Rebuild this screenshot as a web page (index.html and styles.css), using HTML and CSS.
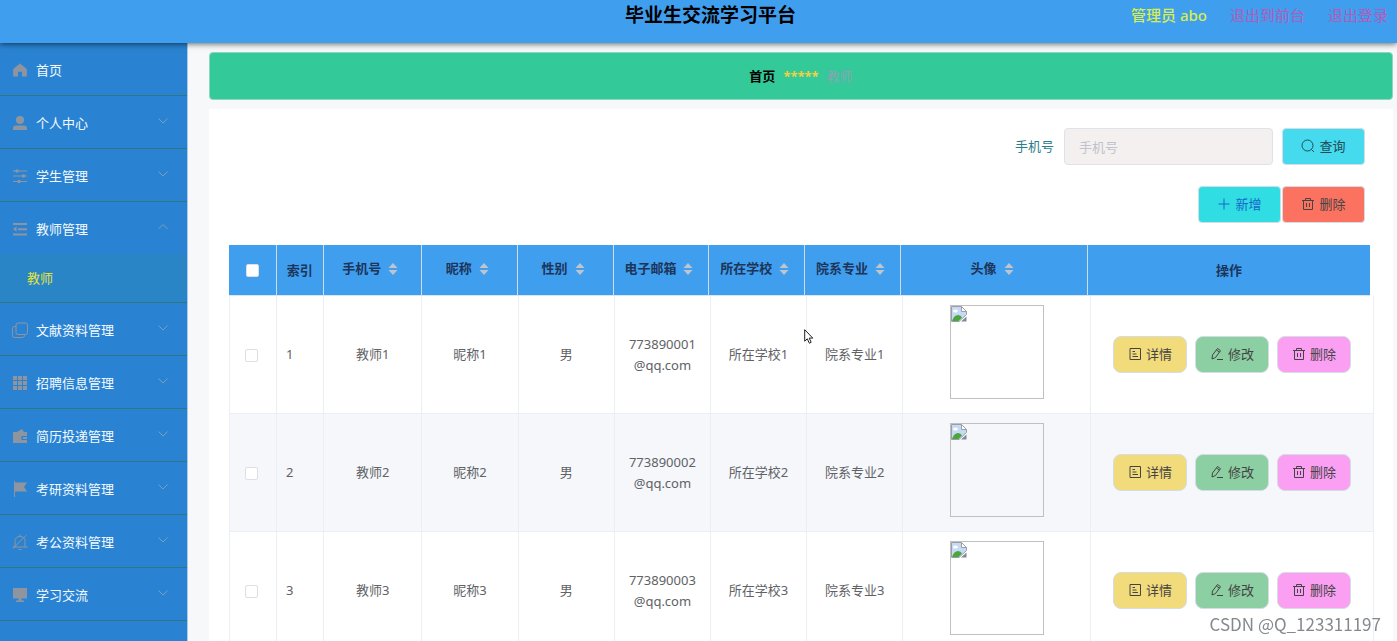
FILE: index.html
```html
<!DOCTYPE html>
<html lang="zh-CN">
<head>
<meta charset="utf-8">
<title>毕业生交流学习平台</title>
<link rel="stylesheet" href="styles.css">
</head>
<body>
<svg class="sprite" aria-hidden="true">
  <symbol id="i-down" viewBox="0 0 14 14"><path d="M2.500 4.500L7 9l4.500-4.500" fill="none" stroke="currentColor"/></symbol>
  <symbol id="i-up" viewBox="0 0 14 14"><path d="M2.500 9L7 4.500 11.500 9" fill="none" stroke="currentColor"/></symbol>
  <symbol id="i-home" viewBox="0 0 16 16"><path d="M8 1.500L1.200 7v7.500H6V9.800h4v4.700h4.800V7z" fill="currentColor"/></symbol>
  <symbol id="i-user" viewBox="0 0 16 16"><circle cx="8" cy="5" r="4" fill="currentColor"/><path d="M1 15v-1.500Q1 10.500 4 10.500h8q3 0 3 3V15z" fill="currentColor"/></symbol>
  <symbol id="i-sliders" viewBox="0 0 16 16"><g fill="none" stroke="currentColor" stroke-width="1.200"><path d="M1 3h14M1 8h14M1 13.500h14"/></g><g fill="currentColor"><circle cx="5" cy="3" r="1.700"/><circle cx="11.500" cy="8" r="1.700"/><circle cx="7" cy="13.500" r="1.700"/></g></symbol>
  <symbol id="i-fold" viewBox="0 0 16 16"><path d="M1 2h14v2H1zM6 7.200h9v2H6zM1 12.400h14v2H1zM4.500 5.500v5.200L1 8.100z" fill="currentColor"/></symbol>
  <symbol id="i-copy" viewBox="0 0 16 16"><g fill="none" stroke="currentColor"><rect x="4" y="1" width="11.500" height="11.500" rx="2"/><path d="M4 4.500H2.500q-2 0-2 2v7q0 2 2 2h8q2 0 2-2v-1"/></g></symbol>
  <symbol id="i-grid" viewBox="0 0 16 16"><path d="M1 1h4v4H1zM6 1h4v4H6zM11 1h4v4h-4zM1 6h4v4H1zM6 6h4v4H6zM11 6h4v4h-4zM1 11h4v4H1zM6 11h4v4H6zM11 11h4v4h-4z" fill="currentColor"/></symbol>
  <symbol id="i-wallet" viewBox="0 0 16 16"><path d="M1 4h4l5-3 2 3h3v4H9.500v4H15v3H1zM11 9h4v2h-4z" fill="currentColor"/></symbol>
  <symbol id="i-flag" viewBox="0 0 16 16"><path d="M2 0h1v1.500h12L12 6l3 4.500H3V16H2z" fill="currentColor"/></symbol>
  <symbol id="i-mute" viewBox="0 0 16 16"><g fill="none" stroke="currentColor"><path d="M3 13V7.500Q3 2.500 8 2.500t5 5V13M.5 13h15M8 .5v2M6.500 15.500h3M.8 14.500L14.500 1"/></g></symbol>
  <symbol id="i-monitor" viewBox="0 0 16 16"><path d="M1 1h14v10.500H1zM6.500 11.500h3v2h2.500V15H4v-1.500h2.500z" fill="currentColor"/></symbol>
  <symbol id="i-search" viewBox="0 0 14 14"><g fill="none" stroke="currentColor"><circle cx="6.500" cy="6.500" r="5.500"/><path d="M10.500 10.500L13 13"/></g></symbol>
  <symbol id="i-plus" viewBox="0 0 14 14"><path d="M7 1.500v11M1.500 7h11" fill="none" stroke="currentColor"/></symbol>
  <symbol id="i-trash" viewBox="0 0 14 14"><path d="M1 3.500h12M2.500 3.500v9h9v-9M4.500 3.500V1.500h5v2M5.500 6v4M8.500 6v4" fill="none" stroke="currentColor"/></symbol>
  <symbol id="i-doc" viewBox="0 0 14 14"><path d="M2 1.500h10.500v11H2zM4.500 4.500h2.500M4.500 7h4M4.500 9.500h5.500" fill="none" stroke="currentColor"/></symbol>
  <symbol id="i-edit" viewBox="0 0 14 14"><path d="M2 12l.5-4L7.500 1.500l3 2.200L5.500 10.500zM6.500 3l3 2.200M7 12.500h6" fill="none" stroke="currentColor"/></symbol>
  <symbol id="i-sort" viewBox="0 0 10 12"><path d="M5 0l4.500 5h-9zM5 12L.5 7h9z" fill="currentColor"/></symbol>
  <symbol id="i-broken" viewBox="0 0 16 16"><path d="M.5.500h10l5 5v3L8 15.500H.5z" fill="#c6d9f5" stroke="#9a9fa6"/><path d="M10.500.500v5h5z" fill="#fff" stroke="#9a9fa6"/><ellipse cx="4.500" cy="5" rx="2.500" ry="1.500" fill="#fff"/><path d="M1 15q2-6 6-6 3 0 4 2.500L7.500 15z" fill="#4ba63b"/><path d="M10 15.500l5.500-5v5z" fill="#7f8a99"/></symbol>
</svg>

<header class="topbar">
  <h1 class="topbar-title">毕业生交流学习平台</h1>
  <div class="topbar-user">
    <span class="user-name">管理员 abo</span>
    <a class="user-link" href="#">退出到前台</a>
    <a class="user-link" href="#">退出登录</a>
  </div>
</header>

<div class="layout">
  <nav class="sidebar">
    <ul class="menu">
      <li class="menu-group"><a class="menu-item" href="#"><svg class="menu-icon"><use href="#i-home"/></svg>首页</a></li>
      <li class="menu-group"><a class="menu-item" href="#"><svg class="menu-icon"><use href="#i-user"/></svg>个人中心<svg class="menu-arrow"><use href="#i-down"/></svg></a></li>
      <li class="menu-group"><a class="menu-item" href="#"><svg class="menu-icon"><use href="#i-sliders"/></svg>学生管理<svg class="menu-arrow"><use href="#i-down"/></svg></a></li>
      <li class="menu-group"><a class="menu-item" href="#"><svg class="menu-icon"><use href="#i-fold"/></svg>教师管理<svg class="menu-arrow"><use href="#i-up"/></svg></a>
        <a class="submenu-item" href="#">教师</a></li>
      <li class="menu-group"><a class="menu-item" href="#"><svg class="menu-icon"><use href="#i-copy"/></svg>文献资料管理<svg class="menu-arrow"><use href="#i-down"/></svg></a></li>
      <li class="menu-group"><a class="menu-item" href="#"><svg class="menu-icon"><use href="#i-grid"/></svg>招聘信息管理<svg class="menu-arrow"><use href="#i-down"/></svg></a></li>
      <li class="menu-group"><a class="menu-item" href="#"><svg class="menu-icon"><use href="#i-wallet"/></svg>简历投递管理<svg class="menu-arrow"><use href="#i-down"/></svg></a></li>
      <li class="menu-group"><a class="menu-item" href="#"><svg class="menu-icon"><use href="#i-flag"/></svg>考研资料管理<svg class="menu-arrow"><use href="#i-down"/></svg></a></li>
      <li class="menu-group"><a class="menu-item" href="#"><svg class="menu-icon"><use href="#i-mute"/></svg>考公资料管理<svg class="menu-arrow"><use href="#i-down"/></svg></a></li>
      <li class="menu-group"><a class="menu-item" href="#"><svg class="menu-icon"><use href="#i-monitor"/></svg>学习交流<svg class="menu-arrow"><use href="#i-down"/></svg></a></li>
    </ul>
  </nav>

  <main class="content">
    <nav class="breadcrumb">
      <a class="crumb-home" href="#">首页</a><span class="crumb-sep">*****</span><span class="crumb-current">教师</span>
    </nav>

    <section class="card">
      <form class="search">
        <label class="search-label" for="phone">手机号</label>
        <input class="search-input" id="phone" type="text" placeholder="手机号">
        <button class="btn btn-search" type="button"><svg class="btn-icon"><use href="#i-search"/></svg>查询</button>
      </form>
      <div class="toolbar">
        <button class="btn btn-add" type="button"><svg class="btn-icon"><use href="#i-plus"/></svg>新增</button>
        <button class="btn btn-remove" type="button"><svg class="btn-icon"><use href="#i-trash"/></svg>删除</button>
      </div>

      <div class="grid">
        <div class="grid-head">
          <table class="table">
            <colgroup><col class="c-check"><col class="c-index"><col class="c-phone"><col class="c-text"><col class="c-text"><col class="c-text"><col class="c-text"><col class="c-text"><col class="c-photo"><col class="c-ops"></colgroup>
            <thead>
              <tr>
                <th><input class="check" type="checkbox" aria-label="全选"></th>
                <th>索引</th>
                <th><span class="sortable">手机号<svg class="sort"><use href="#i-sort"/></svg></span></th>
                <th><span class="sortable">昵称<svg class="sort"><use href="#i-sort"/></svg></span></th>
                <th><span class="sortable">性别<svg class="sort"><use href="#i-sort"/></svg></span></th>
                <th><span class="sortable">电子邮箱<svg class="sort"><use href="#i-sort"/></svg></span></th>
                <th><span class="sortable">所在学校<svg class="sort"><use href="#i-sort"/></svg></span></th>
                <th><span class="sortable">院系专业<svg class="sort"><use href="#i-sort"/></svg></span></th>
                <th><span class="sortable">头像<svg class="sort"><use href="#i-sort"/></svg></span></th>
                <th>操作</th>
              </tr>
            </thead>
          </table>
        </div>
        <table class="table table-body">
          <colgroup><col class="c-check"><col class="c-index"><col class="c-phone"><col class="c-text"><col class="c-text"><col class="c-text"><col class="c-text"><col class="c-text"><col class="c-photo"><col class="c-ops"></colgroup>
          <tbody>
            <tr>
              <td class="cell-check"><input class="check" type="checkbox" aria-label="选择第1行"></td>
              <td class="cell-index">1</td><td>教师1</td><td>昵称1</td><td>男</td><td class="cell-mail">773890001@qq.com</td><td>所在学校1</td><td>院系专业1</td>
              <td class="cell-photo"><div class="photo" role="img" aria-label="头像"><svg class="photo-icon"><use href="#i-broken"/></svg></div></td>
              <td><div class="ops"><button class="btn op op-view" type="button"><svg class="btn-icon"><use href="#i-doc"/></svg>详情</button><button class="btn op op-edit" type="button"><svg class="btn-icon"><use href="#i-edit"/></svg>修改</button><button class="btn op op-del" type="button"><svg class="btn-icon"><use href="#i-trash"/></svg>删除</button></div></td>
            </tr>
            <tr>
              <td class="cell-check"><input class="check" type="checkbox" aria-label="选择第2行"></td>
              <td class="cell-index">2</td><td>教师2</td><td>昵称2</td><td>男</td><td class="cell-mail">773890002@qq.com</td><td>所在学校2</td><td>院系专业2</td>
              <td class="cell-photo"><div class="photo" role="img" aria-label="头像"><svg class="photo-icon"><use href="#i-broken"/></svg></div></td>
              <td><div class="ops"><button class="btn op op-view" type="button"><svg class="btn-icon"><use href="#i-doc"/></svg>详情</button><button class="btn op op-edit" type="button"><svg class="btn-icon"><use href="#i-edit"/></svg>修改</button><button class="btn op op-del" type="button"><svg class="btn-icon"><use href="#i-trash"/></svg>删除</button></div></td>
            </tr>
            <tr>
              <td class="cell-check"><input class="check" type="checkbox" aria-label="选择第3行"></td>
              <td class="cell-index">3</td><td>教师3</td><td>昵称3</td><td>男</td><td class="cell-mail">773890003@qq.com</td><td>所在学校3</td><td>院系专业3</td>
              <td class="cell-photo"><div class="photo" role="img" aria-label="头像"><svg class="photo-icon"><use href="#i-broken"/></svg></div></td>
              <td><div class="ops"><button class="btn op op-view" type="button"><svg class="btn-icon"><use href="#i-doc"/></svg>详情</button><button class="btn op op-edit" type="button"><svg class="btn-icon"><use href="#i-edit"/></svg>修改</button><button class="btn op op-del" type="button"><svg class="btn-icon"><use href="#i-trash"/></svg>删除</button></div></td>
            </tr>
          </tbody>
        </table>
      </div>
    </section>
  </main>
</div>

<svg class="pointer" viewBox="0 0 10 15" aria-hidden="true"><path d="M.7.700v11.500l2.600-2.400 2 4.400 1.900-.9-2-4.200h3.600z" fill="#fff" stroke="#222"/></svg>
<div class="watermark">CSDN @Q_123311197</div>
</body>
</html>
```

FILE: styles.css
```css
* { box-sizing: border-box; }

body {
  margin: 0;
  height: 100vh;
  display: flex;
  flex-direction: column;
  overflow: hidden;
  background: #f7f8fa;
  color: #606266;
  font-family: "Noto Sans", "Noto Sans CJK SC", sans-serif;
  font-size: 13px;
  line-height: 21px;
}

a { color: inherit; text-decoration: none; }
svg { flex: none; }
.sprite { position: absolute; width: 0; height: 0; }

/* Top bar */
.topbar {
  position: relative;
  z-index: 1;
  flex: none;
  height: 43px;
  padding: 0 9px 0 33px;
  display: grid;
  grid-template-columns: 1fr auto 1fr;
  background: #409eef;
  box-shadow: 0 1px 6px rgba(0, 0, 0, 0.6);
  line-height: 30px;
}
.topbar-title {
  grid-column: 2;
  margin: 0;
  color: #000;
  font-size: 19px;
  font-weight: 700;
}
.topbar-user {
  display: flex;
  justify-content: flex-end;
  gap: 23px;
  font-size: 15px;
  white-space: nowrap;
}
.user-name { color: #d8ee4e; font-weight: 500; }
.user-link { color: #b05cb8; }

/* Layout */
.layout { flex: 1; min-height: 0; display: flex; }
.sidebar {
  flex: none;
  width: 188px;
  overflow: hidden;
  background: #2a83d2;
  border-right: 1px solid #a8cbe6;
}
.content {
  flex: 1;
  min-width: 0;
  padding: 9px 4px 0 21px;
  overflow: auto;
  scrollbar-width: none;
}

/* Side menu */
.menu { margin: 0; padding: 0; list-style: none; }
.menu-group { border-bottom: 1px solid #2f7680; }
.menu-item {
  height: 52px;
  padding: 2px 17px 0 12px;
  display: flex;
  align-items: center;
  color: #f4faff;
}
.menu-icon { width: 16px; height: 16px; margin-right: 8px; color: #8e959f; }
.menu-arrow { width: 14px; height: 14px; margin: 0 0 4px auto; color: #7c9dbb; }
.submenu-item {
  height: 48px;
  padding-left: 27px;
  display: flex;
  align-items: center;
  background: #2a85c6;
  color: #e3e53c;
}

/* Breadcrumb */
.breadcrumb {
  height: 48px;
  display: flex;
  align-items: center;
  justify-content: center;
  gap: 8px;
  border: 1px solid #8fd5c0;
  border-radius: 4px;
  background: #33c999;
}
.crumb-home { color: #000; font-weight: 700; }
.crumb-sep { color: #f0d143; font-weight: 700; }
.crumb-current { color: #88a5b5; }

/* Card */
.card { margin-top: 9px; padding: 19px 19px 0 20px; background: #fff; }
.search, .toolbar { display: flex; justify-content: flex-end; align-items: center; padding-right: 9px; }
.search-label { margin-right: 10px; color: #2b7f89; }
.search-input {
  width: 209px;
  height: 37px;
  margin-right: 9px;
  padding: 0 14px;
  border: 1px solid #e0e2ea;
  border-radius: 4px;
  background: #f5f0f0;
  color: #606266;
  font: inherit;
}
.search-input::placeholder { color: #bfc3cb; }
.toolbar { margin-top: 21px; gap: 1px; }

.btn {
  width: 83px;
  height: 37px;
  padding: 0 0 1px;
  display: flex;
  align-items: center;
  justify-content: center;
  gap: 4px;
  border: 1px solid #d4dde4;
  border-radius: 4px;
  color: #444;
  font: inherit;
}
.btn-icon { width: 14px; height: 14px; }
.btn-search { background: #46daee; color: #234a55; }
.btn-add { background: #2fdde2; color: #1b66c9; }
.btn-remove { background: #fb7261; }

/* Data grid */
.grid { margin-top: 22px; }
.grid-head { padding-right: 4px; }
.table { width: 100%; table-layout: fixed; border-collapse: separate; border-spacing: 0; }
.c-check { width: 4.2%; }
.c-index { width: 4.1%; }
.c-phone { width: 8.6%; }
.c-text { width: 8.4%; }
.c-photo { width: 16.4%; }
.c-ops { width: 24.7%; }

th {
  height: 51px;
  padding: 0;
  border-right: 1px solid #cfdde8;
  border-bottom: 1px solid #d6e8f8;
  background: #409eef;
  color: #1c3559;
  font-weight: 700;
  white-space: nowrap;
}
th:last-child { border-right: 0; }
.sortable { display: flex; align-items: center; justify-content: center; gap: 7px; padding: 0 4px 3px 0; }
.sort { width: 10px; height: 12px; color: #c0c4cc; }

td {
  height: 118px;
  padding: 0 9px;
  border-right: 1px solid #ebeef5;
  border-bottom: 1px solid #ebeef5;
  background: #fff;
  text-align: center;
}
td:first-child { border-left: 1px solid #ebeef5; }
tr:nth-child(even) td { background: #f5f7fb; }
.cell-check { padding: 0 4px 0 0; }
.cell-index { text-align: left; }
.cell-mail { padding: 0 12px; word-break: break-all; }
.cell-photo { padding: 9px 9px 10px; vertical-align: top; }

.check {
  appearance: none;
  width: 13px;
  height: 13px;
  margin: 0;
  border: 1px solid #dcdfe6;
  border-radius: 2px;
  background: #fff;
  vertical-align: middle;
}
.photo { width: 94px; height: 94px; margin: 0 auto; border: 1px solid #c0c0c0; }
.photo-icon { display: block; width: 16px; height: 16px; }

.ops { display: flex; justify-content: center; gap: 8px; }
.op { width: 74px; border-radius: 8px; }
.op-view { background: #f2db7b; }
.op-edit { background: #8ccfa2; }
.op-del { background: #fb9ff2; }

/* Overlays */
.pointer { position: absolute; left: 804px; top: 329px; width: 10px; height: 15px; z-index: 2; }
.watermark {
  position: fixed;
  right: 16px;
  bottom: 7px;
  z-index: 2;
  color: #85888c;
  font-family: "Noto Sans CJK SC", sans-serif;
  font-size: 17px;
}
```
